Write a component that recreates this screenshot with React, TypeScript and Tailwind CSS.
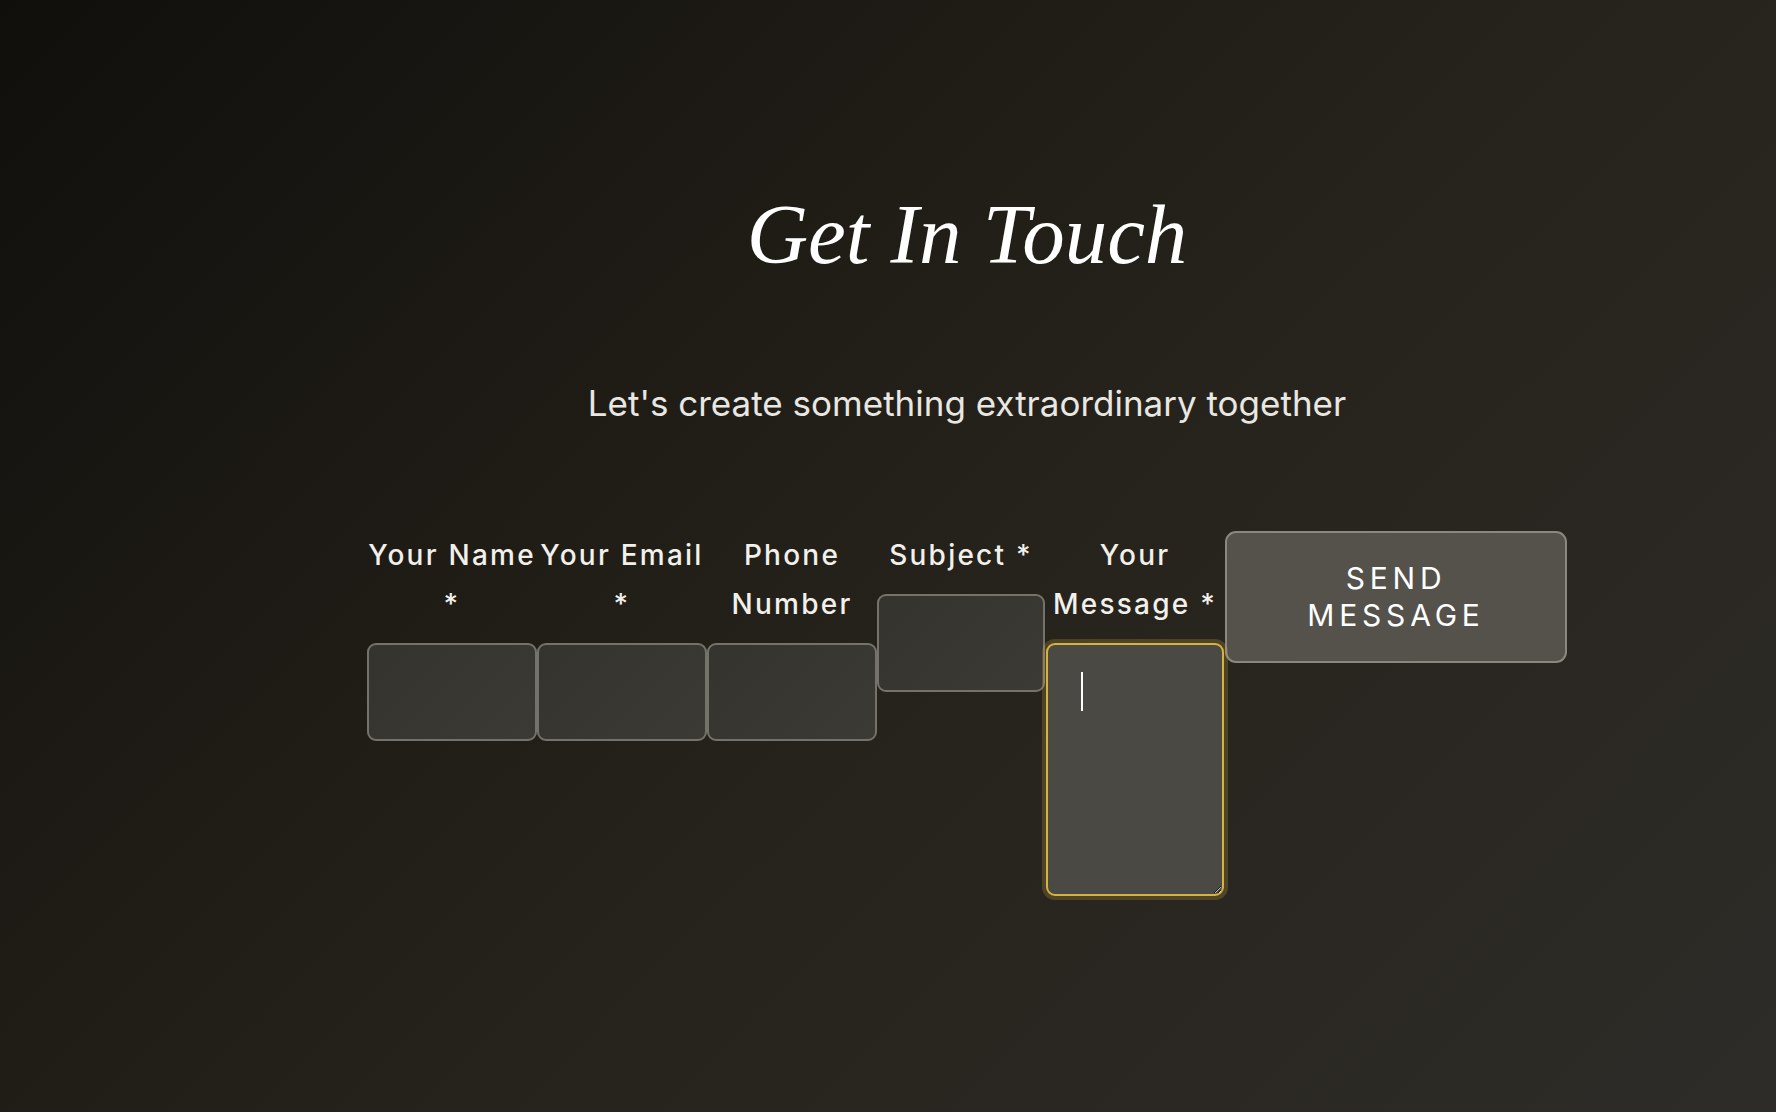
import React from "react";

const labelCls =
  "block text-center text-[28px] leading-[49px] font-medium tracking-[0.08em] text-[#f2f0ea] mb-[14px] [font-family:Inter,'Noto_Sans',sans-serif]";
const inputCls =
  "block w-full h-[98px] rounded-[9px] border-2 border-[#75726b] bg-[linear-gradient(135deg,#35332d,#3c3a34)] outline-none";

function Field({ label, width }: { label: string; width: string }) {
  return (
    <div className={`flex flex-col ${width}`}>
      <label className={labelCls}>{label}</label>
      <input type="text" className={inputCls} />
    </div>
  );
}

export default function App() {
  return (
    <div className="min-h-[1112px] w-full bg-[linear-gradient(135deg,#100f0c_0%,#1f1c16_35%,#26231c_55%,#2e2c28_100%)] pl-[158px] pt-[184px] [font-family:Inter,'Noto_Sans',sans-serif]">
      <div className="flex flex-col items-center">
        <h1 className="text-[85px] leading-[100px] italic font-normal text-white [font-family:'Liberation_Serif','Times_New_Roman',serif]">
          Get In Touch
        </h1>
        <p className="mt-[99px] text-[35px] leading-[40px] font-normal text-[#e9e7e2]">
          Let's create something extraordinary together
        </p>
        <form className="mt-[108px] flex w-[1200px] items-start">
          <Field label="Your Name *" width="w-[170px]" />
          <Field label="Your Email *" width="w-[170px]" />
          <Field label="Phone Number" width="w-[170px]" />
          <Field label="Subject *" width="w-[168px]" />
          <div className="flex w-[180px] flex-col items-center">
            <label className={labelCls}>Your Message *</label>
            <div className="relative w-[178px]">
              <textarea className="block h-[253px] w-full rounded-[9px] border-2 border-[#d6b23e] bg-[#4b4943] shadow-[0_0_0_4px_rgba(214,178,62,0.22)] outline-none" />
              <div className="pointer-events-none absolute left-[35px] top-[29px] h-[39px] w-[2px] bg-white" />
            </div>
          </div>
          <button
            type="button"
            className="flex h-[132px] w-[342px] items-center justify-center rounded-[11px] border-2 border-[#8a8780] bg-[#55524c] px-16 text-[30px] leading-[37px] font-normal tracking-[0.16em] text-white"
          >
            SEND MESSAGE
          </button>
        </form>
      </div>
    </div>
  );
}
